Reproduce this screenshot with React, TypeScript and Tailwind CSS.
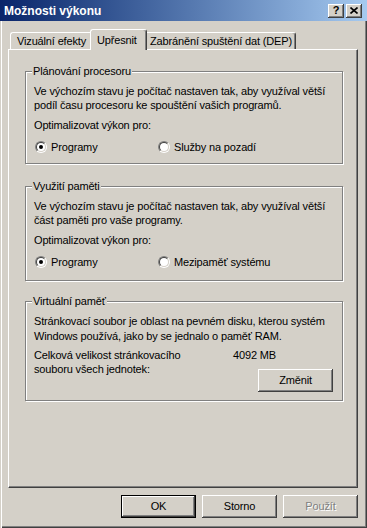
import React from "react";

const raised =
  "shadow-[inset_-1px_-1px_#404040,inset_1px_1px_#ffffff,inset_-2px_-2px_#808080,inset_2px_2px_#d4d0c8]";

function Radio({ checked, label, className = "" }: { checked?: boolean; label: string; className?: string }) {
  return (
    <div className={`flex items-center gap-[4px] ${className}`}>
      <div className="h-[12px] w-[12px] rounded-full border border-t-[#808080] border-l-[#808080] border-r-white border-b-white">
        <div className="flex h-full w-full items-center justify-center rounded-full border border-t-[#404040] border-l-[#404040] border-r-[#d4d0c8] border-b-[#d4d0c8] bg-white">
          {checked && <div className="h-[4px] w-[4px] rounded-full bg-black" />}
        </div>
      </div>
      <span>{label}</span>
    </div>
  );
}

function Group({ title, children, className = "" }: { title: string; children: React.ReactNode; className?: string }) {
  return (
    <fieldset
      className={`border border-[#808080] shadow-[inset_1px_1px_#ffffff,1px_1px_#ffffff] px-[8px] ${className}`}
    >
      <legend className="-ml-[2px] bg-[#d4d0c8] px-[1px] leading-[12px]">{title}</legend>
      {children}
    </fieldset>
  );
}

function Button({
  label,
  isDefault,
  disabled,
  className = "",
}: {
  label: string;
  isDefault?: boolean;
  disabled?: boolean;
  className?: string;
}) {
  return (
    <button
      type="button"
      className={`flex h-[23px] w-[75px] items-center justify-center bg-[#d4d0c8] ${
        isDefault
          ? "border border-black shadow-[inset_-1px_-1px_#404040,inset_1px_1px_#ffffff,inset_-2px_-2px_#808080]"
          : raised
      } ${disabled ? "text-[#808080] [text-shadow:1px_1px_0_#ffffff]" : "text-black"} ${className}`}
    >
      {label}
    </button>
  );
}

export default function App() {
  return (
    <div className="flex h-[528px] w-[367px] flex-col whitespace-nowrap bg-[#d4d0c8] font-['Liberation_Sans',Arial,sans-serif] text-[11px] tracking-[-0.15px] text-black">
      {/* title bar */}
      <div className="flex h-[21px] items-center justify-between bg-gradient-to-r from-[#0a246a] to-[#a6caf0] pl-[4px] pr-[5px]">
        <span className="text-[12px] font-bold tracking-normal text-white">Možnosti výkonu</span>
        <div className="flex">
          <div className={`flex h-[14px] w-[16px] items-center justify-center bg-[#d4d0c8] text-[11px] font-bold ${raised}`}>
            ?
          </div>
          <div className={`ml-[2px] flex h-[14px] w-[16px] items-center justify-center bg-[#d4d0c8] ${raised}`}>
            <svg width="8" height="7" viewBox="0 0 8 7">
              <path d="M0.5 0.5 L7.5 6.5 M7.5 0.5 L0.5 6.5" stroke="black" strokeWidth="1.6" />
            </svg>
          </div>
        </div>
      </div>

      {/* body */}
      <div className="flex flex-1 flex-col px-[8px] pb-[10px] pr-[9px] pt-[8px] shadow-[inset_1px_0_#d4d0c8,inset_2px_0_#ffffff,inset_-1px_-1px_#404040,inset_-2px_-2px_#808080]">
        {/* tabs */}
        <div className="flex h-[20px] items-end pl-[2px]">
          <div className="flex h-[17px] w-[82px] items-center rounded-tl-[3px] border-l border-t border-white pl-[6px] shadow-[inset_-1px_0_#808080]">
            Vizuální efekty
          </div>
          <div className="relative z-10 -mx-[2px] -mb-[1px] flex h-[21px] w-[57px] items-start rounded-t-[3px] border-l border-t border-r border-l-white border-t-white border-r-[#404040] bg-[#d4d0c8] pl-[6px] pt-[2px] shadow-[inset_-1px_0_#808080]">
            Upřesnit
          </div>
          <div className="flex h-[17px] w-[151px] items-center rounded-tr-[3px] border-t border-r border-t-white border-r-[#404040] pl-[5px] shadow-[inset_-1px_0_#808080]">
            Zabránění spuštění dat (DEP)
          </div>
        </div>

        {/* panel */}
        <div className="flex h-[439px] flex-col border border-t-white border-l-white border-r-[#404040] border-b-[#404040] pl-[16px] pr-[14px] pt-[15px] shadow-[inset_-1px_-1px_#808080]">
          <Group title="Plánování procesoru" className="h-[99px]">
            <p className="mt-[7px] leading-[14px]">
              Ve výchozím stavu je počítač nastaven tak, aby využíval větší
              <br />
              podíl času procesoru ke spouštění vašich programů.
            </p>
            <p className="mt-[6px] leading-[14px]">Optimalizovat výkon pro:</p>
            <div className="mt-[8px] flex leading-[14px]">
              <Radio checked label="Programy" className="w-[124px] pl-[1px]" />
              <Radio label="Služby na pozadí" />
            </div>
          </Group>

          <Group title="Využití paměti" className="mt-[16px] h-[101px]">
            <p className="mt-[7px] leading-[14px]">
              Ve výchozím stavu je počítač nastaven tak, aby využíval větší
              <br />
              část paměti pro vaše programy.
            </p>
            <p className="mt-[6px] leading-[14px]">Optimalizovat výkon pro:</p>
            <div className="mt-[8px] flex leading-[14px]">
              <Radio checked label="Programy" className="w-[124px] pl-[1px]" />
              <Radio label="Mezipaměť systému" />
            </div>
          </Group>

          <Group title="Virtuální paměť" className="mt-[14px] h-[106px]">
            <p className="mt-[7px] leading-[15px]">
              Stránkovací soubor je oblast na pevném disku, kterou systém
              <br />
              Windows používá, jako by se jednalo o paměť RAM.
            </p>
            <div className="mt-[4px] flex leading-[14px]">
              <p className="w-[199px]">
                Celková velikost stránkovacího
                <br />
                souboru všech jednotek:
              </p>
              <p>4092 MB</p>
            </div>
            <div className="-mt-[7px] flex justify-end pr-[1px]">
              <Button label="Změnit" />
            </div>
          </Group>
        </div>

        {/* dialog buttons */}
        <div className="mt-[7px] flex justify-end gap-[6px]">
          <Button label="OK" isDefault />
          <Button label="Storno" />
          <Button label="Použít" disabled />
        </div>
      </div>
    </div>
  );
}
